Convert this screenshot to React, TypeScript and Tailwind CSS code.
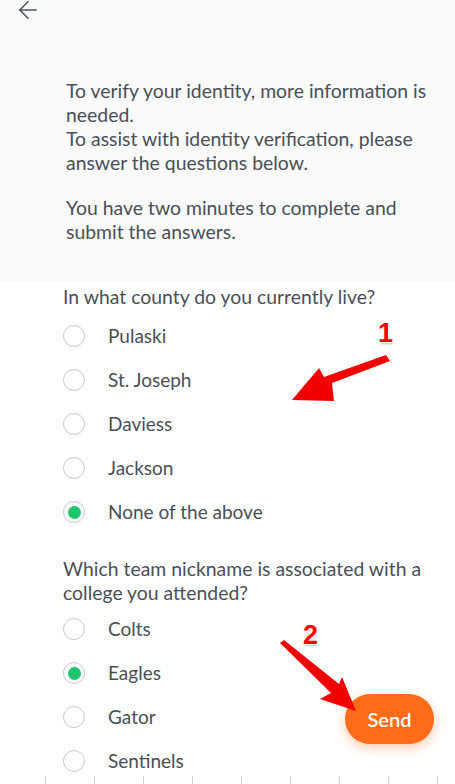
import { ArrowLeft } from 'lucide-react';

const counties = ['Pulaski', 'St. Joseph', 'Daviess', 'Jackson', 'None of the above'];
const teams = ['Colts', 'Eagles', 'Gator', 'Sentinels'];

function Radio({ checked }: { checked: boolean }) {
  return (
    <span className="flex h-[22px] w-[22px] items-center justify-center rounded-full border-[1.5px] border-[#c9c9c9] bg-white">
      {checked && <span className="h-[13px] w-[13px] rounded-full bg-[#1ec46e]" />}
    </span>
  );
}

function Options({ items, selected }: { items: string[]; selected: string }) {
  return (
    <div className="flex flex-col">
      {items.map((item) => (
        <div key={item} className="flex h-[44px] items-center pl-[63px]">
          <Radio checked={item === selected} />
          <span className="ml-[23px] text-[19px] text-[#4a4f57]">{item}</span>
        </div>
      ))}
    </div>
  );
}

export default function App() {
  return (
    <div className="relative h-[784px] w-[455px] overflow-hidden bg-white font-['Lato',sans-serif] text-[#4a4f57]">
      <section className="bg-[#fafafa] pb-[38px]">
        <div className="h-[20px] pl-[14px]">
          <ArrowLeft size={28} strokeWidth={1.3} className="-mt-[4px] text-[#4b525c]" />
        </div>
        <div className="mt-[63px] pl-[66px] pr-[10px] text-[19.4px] leading-[24px]">
          <p>
            To verify your identity, more information is
            <br />
            needed.
            <br />
            To assist with identity verification, please
            <br />
            answer the questions below.
          </p>
          <p className="mt-[21px]">
            You have two minutes to complete and
            <br />
            submit the answers.
          </p>
        </div>
      </section>

      <div className="mt-[3px] pl-[63px] text-[19.4px] leading-[24px]">In what county do you currently live?</div>
      <div className="mt-[5px]">
        <Options items={counties} selected="None of the above" />
      </div>

      <div className="mt-[23px] pl-[63px] text-[19.4px] leading-[24px]">
        Which team nickname is associated with a
        <br />
        college you attended?
      </div>
      <div className="mt-[2px]">
        <Options items={teams} selected="Eagles" />
      </div>

      <div className="absolute bottom-0 left-[45px] flex gap-[48px]">
        {Array.from({ length: 9 }).map((_, i) => (
          <span key={i} className="h-[8px] w-px bg-[#cfcfcf]" />
        ))}
      </div>

      <button className="absolute left-[345px] top-[694px] flex h-[50px] w-[89px] items-center justify-center rounded-full bg-[#ff6b17] text-[20px] font-semibold text-white shadow-[0_4px_12px_rgba(255,107,23,0.35)]">
        Send
      </button>

      <svg className="absolute left-0 top-0" width="455" height="784" viewBox="0 0 455 784">
        <polygon points="386,355 390,361 332,383 334,401 292,400 319,368 324,377" fill="#f20000" />
        <polygon points="280,643 284,640 339,684 342,677 356,711 320,699 331,693" fill="#f20000" />
      </svg>
      <span className="absolute left-[378px] top-[320px] font-['Liberation_Sans',sans-serif] text-[27px] font-black leading-none text-[#f00] [text-shadow:0_0_1px_#fff,1px_1px_1px_#fff,-1px_-1px_1px_#fff,1px_2px_2px_rgba(0,0,0,0.25)]">
        1
      </span>
      <span className="absolute left-[303px] top-[622px] font-['Liberation_Sans',sans-serif] text-[27px] font-black leading-none text-[#f00] [text-shadow:0_0_1px_#fff,1px_1px_1px_#fff,-1px_-1px_1px_#fff,1px_2px_2px_rgba(0,0,0,0.25)]">
        2
      </span>
    </div>
  );
}
